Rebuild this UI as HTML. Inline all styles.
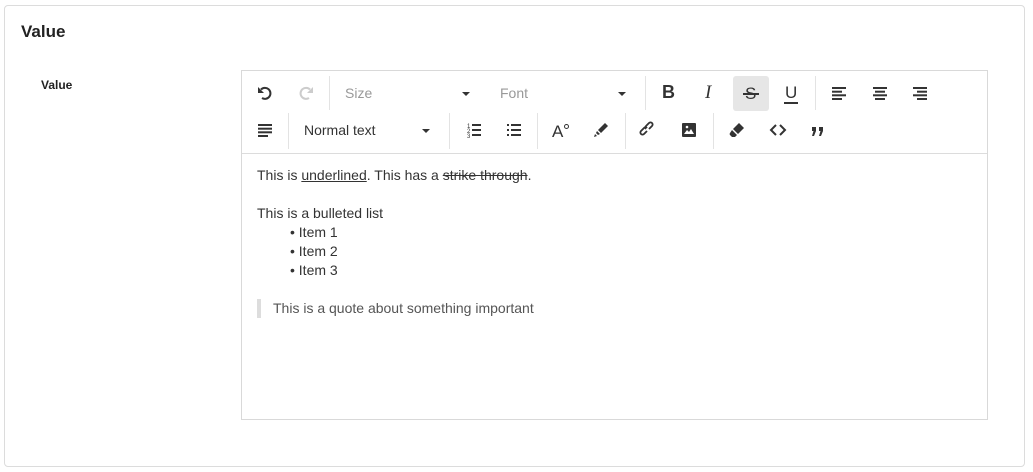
<!DOCTYPE html>
<html><head><style>
body{margin:0;width:1033px;height:472px;background:#fff;font-family:"Liberation Sans",sans-serif;color:#333;position:relative;overflow:hidden}
.a{position:absolute}
.card{left:4px;top:5px;width:1019px;height:460px;border:1px solid #dcdcdc;border-radius:4px}
.ed{left:241px;top:70px;width:745px;height:348px;border:1px solid #d9d9d9}
.sep{position:absolute;width:1px;background:#e3e3e3}
.ic{position:absolute;width:18px;height:18px}
.t{position:absolute;font-size:14px;line-height:19px}
.car{position:absolute;width:0;height:0;border-left:4px solid transparent;border-right:4px solid transparent;border-top:4px solid #333}
</style></head><body>
<div class="a card"></div>
<div class="t" style="left:21px;top:22px;font-size:17px;font-weight:bold;color:#222">Value</div>
<div class="t" style="left:41px;top:76px;font-size:12px;font-weight:bold;color:#222">Value</div>
<div class="a ed"></div>
<div class="a" style="left:242px;top:153px;width:745px;height:1px;background:#dcdcdc"></div>
<div class="a" style="left:733px;top:76px;width:36px;height:35px;background:#e6e6e6;border-radius:3px"></div>
<div class="sep" style="left:329px;top:76px;height:34px"></div>
<div class="sep" style="left:645px;top:76px;height:34px"></div>
<div class="sep" style="left:815px;top:76px;height:34px"></div>
<div class="sep" style="left:288px;top:113px;height:36px"></div>
<div class="sep" style="left:449px;top:113px;height:36px"></div>
<div class="sep" style="left:537px;top:113px;height:36px"></div>
<div class="sep" style="left:625px;top:113px;height:36px"></div>
<div class="sep" style="left:713px;top:113px;height:36px"></div>

<svg class="ic" style="left:256px;top:84px" viewBox="0 0 18 18"><path d="M5 5.5A5.5 5.5 0 1 1 6 14" fill="none" stroke="#333" stroke-width="2"/><path d="M2 3v6h6z" fill="#333"/></svg>
<svg class="ic" style="left:297px;top:84px" viewBox="0 0 18 18"><path d="M13 5.5A5.5 5.5 0 1 0 12 14" fill="none" stroke="#ccc" stroke-width="2"/><path d="M16 3v6h-6z" fill="#ccc"/></svg>
<div class="t" style="left:345px;top:84px;color:#999">Size</div><div class="car" style="left:462px;top:92px"></div>
<div class="t" style="left:500px;top:84px;color:#999">Font</div><div class="car" style="left:618px;top:92px"></div>
<div class="t" style="left:662px;top:83px;font-size:18px;font-weight:bold">B</div>
<div class="t" style="left:705px;top:83px;font-size:19px;font-style:italic;font-family:'Liberation Serif',serif">I</div>
<div class="t" style="left:745px;top:84px;font-size:17px">S</div><div class="a" style="left:743px;top:93px;width:16px;height:1.5px;background:#333"></div>
<div class="t" style="left:785px;top:83px;font-size:17px">U</div><div class="a" style="left:784px;top:102px;width:14px;height:1.5px;background:#333"></div>
<svg class="ic" style="left:830px;top:84px" viewBox="0 0 18 18" fill="#333"><rect x="2" y="3" width="14" height="2"/><rect x="2" y="6.7" width="10" height="2"/><rect x="2" y="10.3" width="14" height="2"/><rect x="2" y="14" width="10" height="2"/></svg>
<svg class="ic" style="left:871px;top:84px" viewBox="0 0 18 18" fill="#333"><rect x="2" y="3" width="14" height="2"/><rect x="4" y="6.7" width="10" height="2"/><rect x="2" y="10.3" width="14" height="2"/><rect x="4" y="14" width="10" height="2"/></svg>
<svg class="ic" style="left:911px;top:84px" viewBox="0 0 18 18" fill="#333"><rect x="2" y="3" width="14" height="2"/><rect x="6" y="6.7" width="10" height="2"/><rect x="2" y="10.3" width="14" height="2"/><rect x="6" y="14" width="10" height="2"/></svg>

<svg class="ic" style="left:256px;top:121px" viewBox="0 0 18 18" fill="#333"><rect x="2" y="3" width="14" height="2"/><rect x="2" y="6.7" width="14" height="2"/><rect x="2" y="10.3" width="14" height="2"/><rect x="2" y="14" width="10" height="2"/></svg>
<div class="t" style="left:304px;top:121px">Normal text</div><div class="car" style="left:422px;top:129px"></div>
<svg class="ic" style="left:465px;top:121px" viewBox="0 0 18 18" fill="#333"><text x="2" y="7" font-size="6" font-family="Liberation Sans">1</text><text x="2" y="12" font-size="6" font-family="Liberation Sans">2</text><text x="2" y="17" font-size="6" font-family="Liberation Sans">3</text><rect x="7" y="3" width="9" height="2"/><rect x="7" y="8" width="9" height="2"/><rect x="7" y="13" width="9" height="2"/></svg>
<svg class="ic" style="left:505px;top:121px" viewBox="0 0 18 18" fill="#333"><rect x="2" y="3" width="2" height="2"/><rect x="2" y="8" width="2" height="2"/><rect x="2" y="13" width="2" height="2"/><rect x="6" y="3" width="10" height="2"/><rect x="6" y="8" width="10" height="2"/><rect x="6" y="13" width="10" height="2"/></svg>
<div class="t" style="left:552px;top:122px;font-size:17px">A</div><div class="a" style="left:564px;top:124px;width:3px;height:3px;border:1.5px solid #333;border-radius:50%"></div>
<svg class="ic" style="left:592px;top:121px" viewBox="0 0 18 18" fill="#333"><path d="M13 2l3 3-7 7-3-3z"/><path d="M5 10l3 3-2 1-2-2z"/><path d="M3 13l2 2-3 1z"/></svg>
<svg class="ic" style="left:639px;top:121px" viewBox="0 0 18 18" fill="none" stroke="#333" stroke-width="1.8"><path d="M8 10l-3 3a2 2 0 0 1-3-3l3-3a2 2 0 0 1 3 0"/><path d="M10 8l3-3a2 2 0 0 0-3-3l-3 3a2 2 0 0 0 0 3"/></svg>
<svg class="ic" style="left:680px;top:121px" viewBox="0 0 18 18"><rect x="2" y="2" width="14" height="14" rx="1" fill="#333"/><path d="M4 13l3-4 2 2 2-3 3 5z" fill="#fff"/><circle cx="7" cy="6" r="1.3" fill="#fff"/></svg>
<svg class="ic" style="left:728px;top:121px" viewBox="0 0 18 18" fill="#333"><path d="M11 2l5 5-6 6-5-5z"/><path d="M4 9l5 5-2 2H4L2 14a1.5 1.5 0 0 1 0-2z"/></svg>
<svg class="ic" style="left:769px;top:121px" viewBox="0 0 18 18" fill="none" stroke="#333" stroke-width="2"><path d="M7 4L2 9l5 5M11 4l5 5-5 5"/></svg>
<svg class="ic" style="left:809px;top:121px" viewBox="0 0 18 18" fill="#333"><path d="M3 6h4v4l-2 5H3l1.5-5H3z"/><path d="M10 6h4v4l-2 5h-2l1.5-5H10z"/></svg>

<div class="t" style="left:257px;top:166px">This is <u>underlined</u>. This has a <s>strike through</s>.</div>
<div class="t" style="left:257px;top:204px">This is a bulleted list</div>
<div class="t" style="left:290px;top:223px">• Item 1</div>
<div class="t" style="left:290px;top:242px">• Item 2</div>
<div class="t" style="left:290px;top:261px">• Item 3</div>
<div class="a" style="left:257px;top:299px;width:4px;height:19px;background:#ddd"></div>
<div class="t" style="left:273px;top:299px;color:#555">This is a quote about something important</div>
</body></html>
